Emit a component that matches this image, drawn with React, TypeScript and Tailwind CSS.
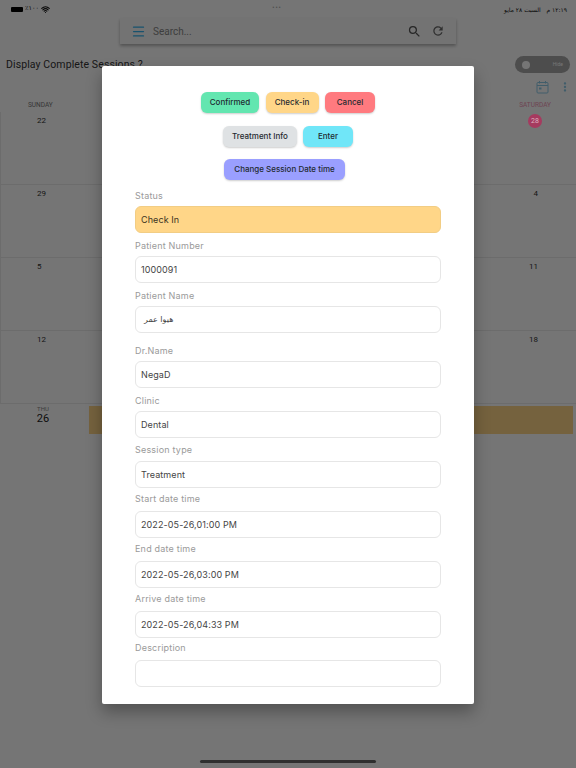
import { Menu, Wifi } from "lucide-react";
import { MdMoreVert, MdRefresh, MdSearch } from "react-icons/md";

const weeks = [
  { left: "22", right: "28" },
  { left: "29", right: "4" },
  { left: "5", right: "11" },
  { left: "12", right: "18" },
];

const topRow = [
  { label: "Confirmed", cls: "w-[58px] bg-[#63e6b0]" },
  { label: "Check-in", cls: "w-[53px] bg-[#ffd688]" },
  { label: "Cancel", cls: "w-[50px] bg-[#ff7a7f]" },
];

// the lower fields sit a pixel further from their labels
const fields = [
  { label: "Patient Number", value: "1000091", mt: "mt-[7px]", gap: "mt-[4px]" },
  { label: "Patient Name", value: "هيوا عمر", mt: "mt-[7px]", gap: "mt-[4px]", rtl: true },
  { label: "Dr.Name", value: "NegaD", mt: "mt-[12px]", gap: "mt-[4px]" },
  { label: "Clinic", value: "Dental", mt: "mt-[7px]", gap: "mt-[4px]" },
  { label: "Session type", value: "Treatment", mt: "mt-[6px]", gap: "mt-[5px]" },
  { label: "Start date time", value: "2022-05-26,01:00 PM", mt: "mt-[5px]", gap: "mt-[6px]" },
  { label: "End date time", value: "2022-05-26,03:00 PM", mt: "mt-[5px]", gap: "mt-[6px]" },
  { label: "Arrive date time", value: "2022-05-26,04:33 PM", mt: "mt-[5px]", gap: "mt-[6px]" },
  { label: "Description", value: "", mt: "mt-[4px]", gap: "mt-[6px]" },
];

function ActionButton({ label, cls }: { label: string; cls: string }) {
  return (
    <button className={`h-[21px] rounded-[6px] pb-[1px] text-[8px] font-medium text-[#1f2a30] shadow-[0_1px_2px_rgba(0,0,0,0.2)] ${cls}`}>
      {label}
    </button>
  );
}

function Background() {
  return (
    <div className="flex h-[768px] flex-col bg-white font-['Roboto',sans-serif] text-[#333]">
      <div className="flex h-[18px] shrink-0 items-center justify-between pl-[11px] pr-[9px] text-[6.5px] text-[#111]">
        <div className="flex items-center gap-[2px]">
          <span className="h-[5px] w-[12px] rounded-[1px] bg-black" />
          <span className="font-['DejaVu_Sans',sans-serif]">٪١٠٠</span>
          <Wifi size={9} strokeWidth={3} />
        </div>
        <div className="tracking-[1px] text-[#aaa]">•••</div>
        <div dir="rtl" className="font-['DejaVu_Sans',sans-serif] text-[6px]">
          ١٢:١٩ م &nbsp; السبت ٢٨ مايو
        </div>
      </div>

      <div className="mx-auto flex h-[26px] w-[336px] shrink-0 items-center bg-[#fafafa] pl-[11px] pr-[11px] shadow-[0_2px_3px_rgba(0,0,0,0.3)]">
        <Menu size={15} strokeWidth={2} className="text-[#35b4f0]" />
        <span className="ml-[7px] flex-1 text-[10px] text-[#888]">Search...</span>
        <MdSearch size={15} className="text-[#555]" />
        <MdRefresh size={14} className="ml-[9px] text-[#666]" />
      </div>

      <div className="mt-[12px] flex items-center justify-between pl-[6px] pr-[6px]">
        <span className="text-[10.5px] tracking-[0.1px]">Display Complete Sessions ?</span>
        <div className="flex h-[17px] w-[55px] items-center justify-between rounded-full bg-[#a8a8a8] px-[7px]">
          <span className="h-[8px] w-[8px] rounded-full bg-white" />
          <span className="text-[5px] text-white">Hide</span>
        </div>
      </div>

      <div className="mt-[7px] flex items-center justify-end gap-[9px] pr-[4px] text-[#8ecbe8]">
        <svg width="13" height="14" viewBox="0 0 13 14" fill="none" stroke="currentColor" strokeWidth="1">
          <rect x="1" y="2.5" width="11" height="10.5" rx="1" />
          <path d="M1 5.5h11M3.5 1v2.5M9.5 1v2.5" />
          <rect x="3" y="7.5" width="2.5" height="2" fill="currentColor" stroke="none" />
        </svg>
        <MdMoreVert size={14} />
      </div>

      <div className="mt-[7px] flex justify-between pl-[28px] pr-[25px] text-[6.5px] leading-[8px] text-[#777]">
        <span>SUNDAY</span>
        <span className="text-[#f095b5]">SATURDAY</span>
      </div>

      <div className="mt-[3px] border-l border-[#ececec]">
        {weeks.map((w) => (
          <div key={w.left} className="flex h-[73px] justify-between border-b border-[#ececec] pl-[36px] pr-[38px] pt-[3px] text-[8px]">
            <span>{w.left}</span>
            {w.right === "28" ? (
              <span className="relative z-10 -mr-[4px] -mt-[1px] flex h-[14px] w-[14px] items-center justify-center rounded-full bg-[#a63a5f] text-[7px] text-[#dcb0bf]">
                {w.right}
              </span>
            ) : (
              <span>{w.right}</span>
            )}
          </div>
        ))}
      </div>

      <div className="flex pt-[2px]">
        <div className="flex w-[86px] flex-col items-center leading-none">
          <span className="text-[6px] text-[#888]">THU</span>
          <span className="mt-[1px] text-[11px] text-[#222]">26</span>
        </div>
        <div className="ml-[3px] mr-[3px] h-[28px] flex-1 bg-[#ffd688]" />
      </div>
    </div>
  );
}

export default function App() {
  return (
    <div className="relative h-[768px] w-[576px] overflow-hidden">
      <Background />
      <div className="absolute inset-0 bg-black/[0.54]" />

      <div className="absolute left-[102px] top-[66px] h-[638px] w-[372px] rounded-[2px] bg-white px-[33px] pt-[26px] font-['Inter',sans-serif] shadow-[0_8px_16px_rgba(0,0,0,0.3)]">
        <div className="flex justify-center gap-[6.5px]">
          {topRow.map((b) => (
            <ActionButton key={b.label} label={b.label} cls={b.cls} />
          ))}
        </div>
        <div className="mt-[13px] flex justify-center gap-[6px]">
          <ActionButton label="Treatment Info" cls="w-[74px] bg-[#dfe2e4]" />
          <ActionButton label="Enter" cls="w-[50px] bg-[#70e6f8]" />
        </div>
        <div className="mt-[12px] flex justify-center pr-[7px]">
          <ActionButton label="Change Session Date time" cls="w-[121px] bg-[#9a9fff]" />
        </div>

        <p className="mt-[10px] text-[9px] leading-[12px] tracking-[0.2px] text-[#9a9a9a]">Status</p>
        <div className="mt-[4px] flex h-[27px] items-center rounded-[6px] border border-[#f2cd84] bg-[#ffd688] px-[5px] text-[9px] tracking-[0.1px] text-[#3b3322]">
          Check In
        </div>

        {fields.map((f) => (
          <div key={f.label} className={f.mt}>
            <p className="text-[9px] leading-[12px] tracking-[0.2px] text-[#9a9a9a]">{f.label}</p>
            <div className={`${f.gap} flex h-[27px] items-center rounded-[6px] border border-[#e6e6e6] bg-white px-[5px] text-[9px] tracking-[0.1px] text-[#444]`}>
              {f.rtl ? <span className="ml-[3px] font-['DejaVu_Sans',sans-serif] text-[8px]">{f.value}</span> : f.value}
            </div>
          </div>
        ))}
      </div>

      <div className="absolute bottom-[5px] left-[200px] h-[3px] w-[176px] rounded-full bg-[#2f2f2f]" />
    </div>
  );
}
